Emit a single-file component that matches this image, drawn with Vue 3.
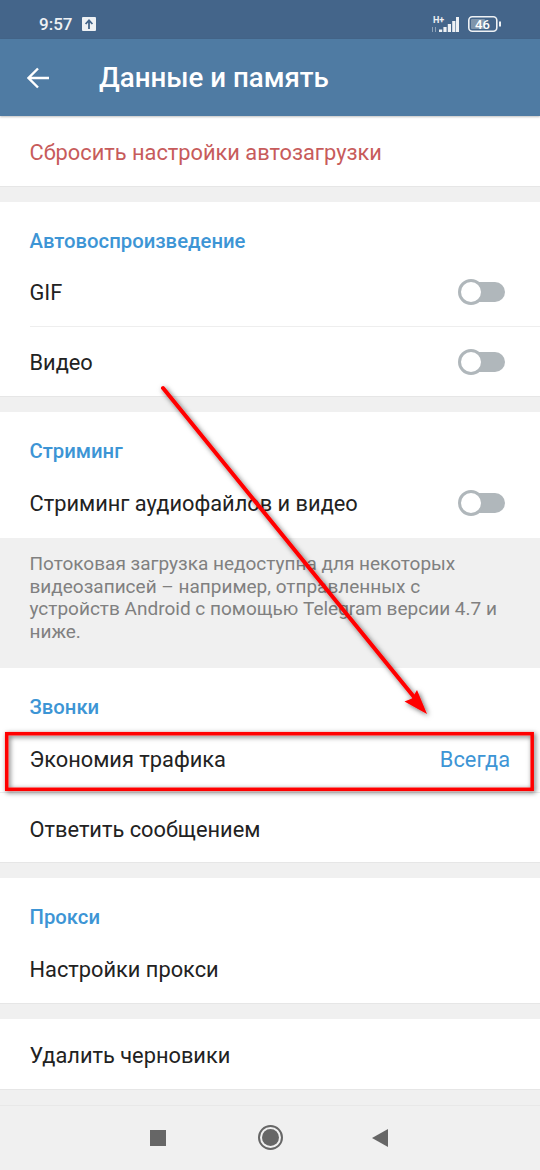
<script setup>
const notice = 'Потоковая загрузка недоступна для некоторых видеозаписей – например, отправленных с устройств Android с помощью Telegram версии 4.7 и ниже.'
</script>

<template>
  <div class="phone">
    <div class="status">
      <span class="time">9:57</span>
      <span class="upload">
        <svg width="14" height="14" viewBox="0 0 14 14"><rect width="14" height="14" rx="1" fill="#eef1f4" /><path d="M7 12V4M3.6 7L7 3.4 10.4 7" fill="none" stroke="#44658a" stroke-width="1.8" /></svg>
      </span>
      <span class="status-right">
        <svg width="28" height="17" viewBox="0 0 28 17">
          <text x="2" y="7" class="hplus">H+</text>
          <path d="M8 16h3.2v-2.5H8zM12.4 16h3.2v-5H12.4zM16.8 16H20V8h-3.2zM21.2 16h3.2V5h-3.2zM25 16h3V1h-3z" fill="#eef1f4" />
          <path d="M1.5 16v-5M4.5 11v5" stroke="#8fa3b8" stroke-width="1" />
        </svg>
        <svg width="33" height="16" viewBox="0 0 33 16">
          <rect x="0.8" y="0.8" width="28" height="14.4" rx="3.5" fill="none" stroke="#eef1f4" stroke-width="1.6" />
          <rect x="3" y="3" width="14" height="10" rx="1" fill="#7f95ab" />
          <rect x="31" y="5.5" width="2" height="5" fill="#eef1f4" />
          <text x="14.5" y="12.8" class="batt" text-anchor="middle">46</text>
        </svg>
      </span>
    </div>
    <header class="toolbar">
      <svg class="back" width="24" height="24" viewBox="0 0 24 24"><path d="M22 12H1.5M11 2.5L1.5 12l9.5 9.5" fill="none" stroke="#fff" stroke-width="2.4" /></svg>
      <h1>Данные и память</h1>
    </header>

    <section class="block">
      <div class="row danger">Сбросить настройки автозагрузки</div>
    </section>

    <section class="block">
      <div class="title">Автовоспроизведение</div>
      <div class="row gif">
        <span>GIF</span>
        <span class="switch"><i></i></span>
      </div>
      <div class="row video">
        <span>Видео</span>
        <span class="switch"><i></i></span>
      </div>
    </section>

    <section class="block streaming">
      <div class="title">Стриминг</div>
      <div class="row stream-row">
        <span>Стриминг аудиофайлов и видео</span>
        <span class="switch"><i></i></span>
      </div>
    </section>
    <p class="note">{{ notice }}</p>

    <section class="block">
      <div class="title">Звонки</div>
      <div class="row eco">
        <span>Экономия трафика</span>
        <span class="value">Всегда</span>
      </div>
      <div class="row reply">Ответить сообщением</div>
    </section>

    <section class="block">
      <div class="title">Прокси</div>
      <div class="row proxy-row">Настройки прокси</div>
    </section>

    <section class="block">
      <div class="row drafts">Удалить черновики</div>
    </section>

    <nav class="navbar">
      <span class="square"></span>
      <span class="circle"><i></i></span>
      <svg width="16" height="20" viewBox="0 0 16 20"><path d="M0 10L16 1v18z" fill="#666" /></svg>
    </nav>

    <!-- annotation drawn on top of the screenshot -->
    <svg class="markup" width="540" height="1170" viewBox="0 0 540 1170">
      <defs>
        <filter id="soft" x="-20%" y="-20%" width="140%" height="140%">
          <feDropShadow dx="1.5" dy="1.5" stdDeviation="2.5" flood-color="#000" flood-opacity="0.6" />
        </filter>
      </defs>
      <g filter="url(#soft)">
        <path d="M163 388L414 697" stroke="#f00" stroke-width="4" stroke-linecap="round" />
        <path d="M427 714L404.5 701.500 412 698.500 417 690z" fill="#f00" />
        <rect x="6.7" y="733.7" width="525.5" height="55.6" fill="none" stroke="#f00" stroke-width="3.5" />
      </g>
    </svg>
  </div>
</template>

<style scoped>
.phone {
  position: relative;
  width: 540px;
  height: 1170px;
  overflow: hidden;
  background: #f0f0f0;
  font-family: Roboto, "Noto Sans", sans-serif;
  color: #222;
}
.status {
  height: 39px;
  background: #44658a;
  display: flex;
  align-items: center;
  padding: 9px 39px 0;
  box-sizing: border-box;
  color: #eef1f4;
}
.time {
  font-size: 17px;
  font-weight: 500;
}
.upload {
  display: flex;
  margin-left: 10px;
}
.status-right {
  margin-left: auto;
  display: flex;
  align-items: center;
  gap: 9px;
}
.hplus {
  font: 700 9px Roboto, sans-serif;
  fill: #eef1f4;
}
.batt {
  font: 500 13px Roboto, sans-serif;
  fill: #fff;
}
.toolbar {
  height: 77px;
  background: #4f7ba3;
  display: flex;
  align-items: center;
  padding-left: 27px;
  box-shadow: 0 1px 2px rgba(0, 0, 0, 0.25);
  position: relative;
}
.toolbar h1 {
  margin: 0 0 0 48px;
  font-size: 27.7px;
  font-weight: 500;
  color: #fff;
}
.block {
  background: #fff;
  border-bottom: 1px solid #e6e6e6;
  margin-bottom: 15px;
}
.row {
  display: flex;
  align-items: center;
  justify-content: space-between;
  padding: 0 35px 0 29.5px;
  font-size: 21.8px;
  height: 70px;
  box-sizing: border-box;
}
.danger {
  color: #c75b5b;
  padding-top: 2px;
}
.title {
  height: 56px;
  box-sizing: border-box;
  padding: 28px 29.5px 0;
  font-size: 20.3px;
  font-weight: 500;
  line-height: 22px;
  color: #3d95d5;
}
.gif {
  height: 69px;
  border-bottom: 1px solid #eee;
  margin-left: 29.5px;
  padding-left: 0;
}
.video {
  height: 69px;
  padding-top: 1px;
}
.switch {
  position: relative;
  width: 46px;
  height: 20px;
  border-radius: 10px;
  background: #b0b7bb;
}
.switch i {
  position: absolute;
  left: -1px;
  top: -3px;
  width: 26px;
  height: 26px;
  box-sizing: border-box;
  border: 3px solid #b0b7bb;
  border-radius: 50%;
  background: #fff;
}
.streaming {
  margin-bottom: 0;
  border-bottom: 0;
}
.note {
  margin: 0;
  height: 130px;
  box-sizing: border-box;
  padding: 15px 30px 0 29.5px;
  font-size: 19px;
  line-height: 22.7px;
  color: #808080;
}
.eco {
  height: 69px;
  padding-top: 3px;
  border-bottom: 1px solid #eee;
}
.value {
  color: #3d95d5;
  margin-right: -5px;
}
.reply {
  height: 69px;
  padding-top: 3px;
}
.proxy-row {
  height: 69px;
  padding-top: 1px;
}
.drafts {
  padding-top: 2px;
}
.navbar {
  height: 65px;
  border-top: 1px solid #e8e8e8;
  box-sizing: border-box;
  display: flex;
  align-items: center;
  padding: 0 0 1px 150px;
}
.square {
  width: 16px;
  height: 16px;
  background: #666;
  margin-right: 92px;
}
.circle {
  width: 25px;
  height: 25px;
  border: 2px solid #666;
  border-radius: 50%;
  box-sizing: border-box;
  display: flex;
  align-items: center;
  justify-content: center;
  margin-right: 89px;
}
.circle i {
  width: 17px;
  height: 17px;
  background: #666;
  border-radius: 50%;
}
.markup {
  position: absolute;
  left: 0;
  top: 0;
  pointer-events: none;
}
</style>
